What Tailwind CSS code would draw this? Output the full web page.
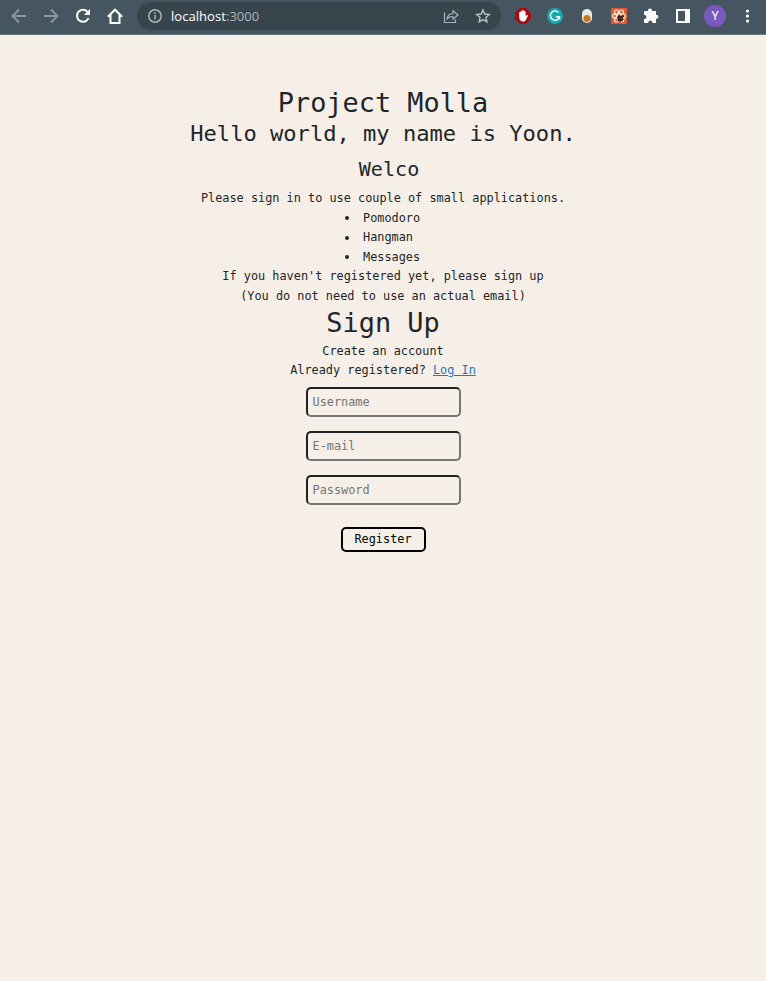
<!DOCTYPE html>
<html lang="en">
<head>
<meta charset="utf-8">
<title>Project Molla</title>
<script src="https://cdn.jsdelivr.net/npm/@tailwindcss/browser@4"></script>
</head>
<body class="h-[981px] overflow-hidden bg-[#f6efe7] text-[#212529]">
<header class="flex h-[35px] items-center border-b border-[#6b7a82] bg-[#455660] pb-[2px] font-['Open_Sans',sans-serif]">
  <svg class="ml-[11px] size-4 shrink-0" viewBox="0 0 16 16" fill="none" stroke="#8f969b" stroke-width="1.8"><path d="M15 8H2M8 1.500 1.500 8 8 14.500"/></svg>
  <svg class="ml-[16px] size-4 shrink-0" viewBox="0 0 16 16" fill="none" stroke="#8f969b" stroke-width="1.8"><path d="M1 8h13M8 1.500 14.500 8 8 14.500"/></svg>
  <svg class="ml-[16px] size-4 shrink-0" viewBox="0 0 16 16" fill="none" stroke="#fff" stroke-width="2"><path d="M13.600 10A6 6 0 1 1 12.500 3.800"/><path d="M15 1v6H9z" fill="#fff" stroke="none"/></svg>
  <svg class="ml-[16px] size-4 shrink-0" viewBox="0 0 16 16" fill="none" stroke="#fff" stroke-width="2"><path d="M.8 8.800 8 1.700l7.200 7.100M3.500 7v8h9V7"/></svg>
  <div class="ml-[14px] flex h-7 w-[364px] shrink-0 items-center rounded-full bg-[#38454c] pl-[11px]">
    <svg class="size-[14px]" viewBox="0 0 14 14" fill="none" stroke="#a9b6bd" stroke-width="1.500"><circle cx="7" cy="7" r="6.200"/><path d="M7 6v4.500M7 3.300v1.600"/></svg>
    <div class="ml-[9px] w-[272px] text-[13px] leading-7 tracking-[0.05px] text-[#a9b4bc]"><span class="text-white">localhost</span>:3000</div>
    <svg class="size-4" viewBox="0 0 16 16" fill="none" stroke="#a6b6bf" stroke-width="1.200"><path d="M1.500 4.500v10h11v-3M4 11.500c.3-4 2.300-5.800 6-6V2.500L15 7l-5 4.300V8.500c-3 0-4.700.8-6 3z"/></svg>
    <svg class="ml-[16px] size-4" viewBox="0 0 16 16" fill="none" stroke="#b5c3ca" stroke-width="1.400"><path d="m8 2 1.800 4 4.500.5-3.400 3 1 4.400L8 11.600l-3.900 2.300 1-4.400-3.400-3 4.500-.5z"/></svg>
  </div>
  <svg class="ml-[14px] size-4 shrink-0" viewBox="0 0 16 16"><path d="M5 0h6l5 5v6l-5 5H5l-5-5V5z" fill="#a80b12"/><path d="M4.200 8.500V4.300q.9-1 1.600 0V3q.8-1 1.600 0v-.6q.8-.9 1.600 0v1.200q.9-1 1.600 0v4.900l1-1.400q1.300-.4 1.400.6L10.800 12q-.7 1.600-2.600 1.600-4 0-4-5.100" fill="#fff"/></svg>
  <svg class="ml-[16px] size-4 shrink-0" viewBox="0 0 16 16"><circle cx="8" cy="8" r="8" fill="#15a9b2"/><path d="M11.400 4.500A4.600 4.600 0 1 0 12.500 8.700H8.800M12.500 8.300v3.200" fill="none" stroke="#fff" stroke-width="1.400"/></svg>
  <svg class="ml-[16px] size-4 shrink-0" viewBox="0 0 16 16"><rect x="3" y="1" width="10" height="14" rx="5" fill="#e8ebe3"/><circle cx="8" cy="10.500" r="3.500" fill="#c97222"/></svg>
  <svg class="ml-[16px] size-4 shrink-0" viewBox="0 0 16 16"><path d="M0 0h16v16H0z" fill="#dc5b30"/><g fill="none" stroke="#ffeede" stroke-width="1.200"><circle cx="5.500" cy="4" r="2"/><circle cx="10.500" cy="4" r="2"/><circle cx="3.500" cy="8" r="1.900"/><circle cx="12.500" cy="8" r="1.900"/><circle cx="5.500" cy="12" r="1.900"/><circle cx="8" cy="7.500" r="1.900"/><path d="M10 14q3.500-.4 3-4"/></g><path d="m6.500 8.500 2-1.500 1.500 1 2-1.500 1 2-1.200 1 .8 2-2.500 2-2-.5-1.600.6.6-2.600-1.100-.8z" fill="#291b18"/><path d="m8.500 9 2.700 2.500M8 11.500l3.500-3" stroke="#b94a2a" stroke-width=".6"/></svg>
  <svg class="ml-[16px] size-4 shrink-0" viewBox="0 0 16 16"><path d="M2 3h3V2.500a2 2 0 0 1 4 0V3h4v3.800h.4a2 2 0 0 1 0 4H13V15H9.300v-.4a2 2 0 0 0-4 0v.4H1v-4h.5a2 2 0 0 0 0-4H1V4q0-1 1-1" fill="#fff"/></svg>
  <svg class="ml-[16px] size-4 shrink-0" viewBox="0 0 16 16"><path fill="#fff" fill-rule="evenodd" d="M1 1h14v14H1zM3 3v10h7V3z"/></svg>
  <div class="ml-[13px] flex size-[22px] shrink-0 items-center justify-center rounded-full bg-[#7a58bd] font-['Roboto',sans-serif] text-[12px] text-white">Y</div>
  <svg class="ml-[13px] size-4 shrink-0" viewBox="0 0 16 16" fill="#fff"><circle cx="8.500" cy="3" r="1.600"/><circle cx="8.500" cy="8" r="1.600"/><circle cx="8.500" cy="13" r="1.600"/></svg>
</header>
<main class="flex flex-col items-center pt-[50px] font-['DejaVu_Sans_Mono',monospace] text-[11.875px] leading-[19.500px] whitespace-nowrap">
  <h1 class="h-[34px] text-[26.900px] leading-[35px]">Project Molla</h1>
  <h2 class="h-[34px] text-[22.080px] leading-[30px]">Hello world, my name is Yoon.</h2>
  <h3 class="ml-[12px] h-[36px] text-[20.100px] leading-[33px]">Welco</h3>
  <p>Please sign in to use couple of small applications.</p>
  <ul class="w-[76px]">
    <li class="flex items-center"><span class="mr-[14px] size-1 rounded-full bg-[#212529]"></span>Pomodoro</li>
    <li class="flex items-center"><span class="mr-[14px] size-1 rounded-full bg-[#212529]"></span>Hangman</li>
    <li class="flex items-center"><span class="mr-[14px] size-1 rounded-full bg-[#212529]"></span>Messages</li>
  </ul>
  <p>If you haven't registered yet, please sign up</p>
  <p>(You do not need to use an actual email)</p>
  <h1 class="h-[35.750px] text-[26.900px] leading-[33px]">Sign Up</h1>
  <p>Create an account</p>
  <p>Already registered? <a href="#" class="text-[#1b7bc4] underline">Log In</a></p>
  <form class="mt-[6.500px] flex flex-col items-center">
    <input class="mb-[14px] h-[30px] w-[155px] rounded-[5px] border-2 border-t-[#212121] border-r-[#757575] border-b-[#757575] border-l-[#212121] px-[5px] placeholder:text-[#757575]" placeholder="Username">
    <input class="mb-[14px] h-[30px] w-[155px] rounded-[5px] border-2 border-t-[#212121] border-r-[#757575] border-b-[#757575] border-l-[#212121] px-[5px] placeholder:text-[#757575]" placeholder="E-mail">
    <input type="password" class="mb-[22px] h-[30px] w-[155px] rounded-[5px] border-2 border-t-[#212121] border-r-[#757575] border-b-[#757575] border-l-[#212121] px-[5px] placeholder:text-[#757575]" placeholder="Password">
    <button type="button" class="h-[25px] w-[85px] rounded-[5px] border-2 border-black pb-px leading-[19px] text-black">Register</button>
  </form>
</main>
</body>
</html>
